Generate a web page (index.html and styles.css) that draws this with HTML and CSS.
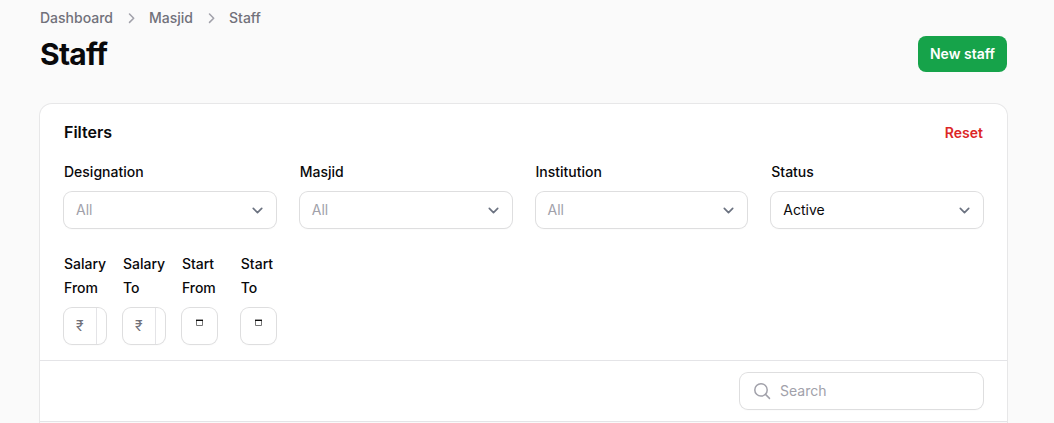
FILE: index.html
```html
<!DOCTYPE html>
<html lang="en">
<head>
<meta charset="utf-8">
<title>Staff</title>
<link rel="stylesheet" href="styles.css">
</head>
<body>
<main class="page">
  <nav class="breadcrumbs">
    <span>Dashboard</span>
    <svg class="crumb-icon" viewBox="0 0 20 20"><path d="M8.500 6 12.700 10.200l-4.200 4.200"/></svg>
    <span>Masjid</span>
    <svg class="crumb-icon" viewBox="0 0 20 20"><path d="M8.500 6 12.700 10.200l-4.200 4.200"/></svg>
    <span>Staff</span>
  </nav>
  <header class="heading">
    <h1>Staff</h1>
    <button class="primary" type="button">New staff</button>
  </header>
  <section class="card">
    <div class="filters">
      <div class="filters-head"><h2>Filters</h2><a class="reset">Reset</a></div>
      <div class="grid">
        <div class="field"><span class="label">Designation</span><div class="control select"><span class="muted">All</span><svg class="chevron" viewBox="0 0 20 20"><path d="m6 8 4 4 4-4"/></svg></div></div>
        <div class="field"><span class="label">Masjid</span><div class="control select"><span class="muted">All</span><svg class="chevron" viewBox="0 0 20 20"><path d="m6 8 4 4 4-4"/></svg></div></div>
        <div class="field"><span class="label">Institution</span><div class="control select"><span class="muted">All</span><svg class="chevron" viewBox="0 0 20 20"><path d="m6 8 4 4 4-4"/></svg></div></div>
        <div class="field"><span class="label">Status</span><div class="control select"><span>Active</span><svg class="chevron" viewBox="0 0 20 20"><path d="m6 8 4 4 4-4"/></svg></div></div>
        <div class="ranges">
          <div class="field"><span class="label">Salary From</span><div class="control money"><span class="prefix">₹</span></div></div>
          <div class="field"><span class="label">Salary To</span><div class="control money"><span class="prefix">₹</span></div></div>
          <div class="field"><span class="label">Start From</span><div class="control date"><svg class="calendar" viewBox="0 0 7 7"><path class="calendar-frame" d="M.5 1v5.500h6V1"/><path class="calendar-top" d="M0 .6h7V2H0z"/></svg></div></div>
          <div class="field"><span class="label">Start To</span><div class="control date"><svg class="calendar" viewBox="0 0 7 7"><path class="calendar-frame" d="M.5 1v5.500h6V1"/><path class="calendar-top" d="M0 .6h7V2H0z"/></svg></div></div>
        </div>
      </div>
    </div>
    <div class="toolbar">
      <div class="control search"><svg class="search-icon" viewBox="0 0 20 20"><circle cx="9" cy="8.900" r="6.200"/><path d="m13.500 13.400 4 4"/></svg><span class="muted">Search</span></div>
    </div>
    <div class="results"></div>
  </section>
</main>
</body>
</html>
```
FILE: styles.css
```css
* { box-sizing: border-box; }
body {
  margin: 0;
  height: 423px;
  overflow: hidden;
  background: #fafafa;
  color: #09090b;
  font: 14px/20px Inter, "Noto Sans", sans-serif;
}
h1, h2 { margin: 0; }
.page { padding: 8px 47px 0 40px; }
.breadcrumbs {
  display: flex;
  align-items: center;
  gap: 8px;
  color: #71717a;
  font-weight: 500;
}
.crumb-icon {
  width: 20px;
  height: 20px;
  fill: none;
  stroke: #a1a1aa;
  stroke-width: 1.5;
  stroke-linecap: round;
  stroke-linejoin: round;
}
.heading {
  display: flex;
  justify-content: space-between;
  margin: 8px 0 32px;
}
h1 {
  font-size: 30px;
  line-height: 36px;
  font-weight: 700;
  letter-spacing: -0.025em;
}
.primary {
  width: 89px;
  height: 36px;
  padding: 0;
  border: 0;
  border-radius: 8px;
  background: #16a34a;
  color: #fff;
  font: 600 14px/20px Inter, sans-serif;
  white-space: nowrap;
}
.card {
  border-radius: 12px 12px 0 0;
  background: #fff;
  box-shadow: 0 0 0 1px #e7e7e8;
}
.filters { padding: 16px 24px; }
.filters-head {
  display: flex;
  align-items: center;
  justify-content: space-between;
  height: 24px;
}
h2 { font-size: 16px; line-height: 24px; font-weight: 600; }
.reset { color: #dc2626; font-weight: 600; padding-top: 2px; }
.grid {
  display: grid;
  grid-template-columns: repeat(4, minmax(0, 1fr));
  gap: 24px;
  margin-top: 16px;
}
.ranges {
  display: grid;
  grid-template-columns: repeat(4, minmax(0, 1fr));
  gap: 24px;
}
.label { display: block; line-height: 24px; font-weight: 500; }
.control {
  display: flex;
  align-items: center;
  height: 36px;
  border-radius: 8px;
  background: #fff;
  box-shadow: 0 0 0 1px #dededf, 0 1px 2px rgba(0, 0, 0, .05);
}
.field .control { margin-top: 8px; }
.select { justify-content: space-between; padding: 0 8px 0 12px; }
.muted { color: #a1a1aa; }
.chevron {
  width: 21px;
  height: 21px;
  fill: none;
  stroke: #6b7280;
  stroke-width: 1.6;
  stroke-linecap: round;
  stroke-linejoin: round;
}
.money { width: 42px; }
.prefix {
  width: 33px;
  height: 36px;
  padding-left: 12px;
  border-right: 1px solid #e4e4e7;
  color: #71717a;
  line-height: 36px;
}
.date { align-items: flex-start; justify-content: center; padding-top: 11px; }
.calendar { width: 7px; height: 7px; }
.calendar-frame { fill: none; stroke: #777; }
.calendar-top { fill: #111; }
.toolbar {
  display: flex;
  justify-content: flex-end;
  padding: 12px 24px;
  border-top: 1px solid #e4e4e7;
}
.search { width: 243px; gap: 8px; padding-left: 12px; }
.search-icon {
  width: 20px;
  height: 20px;
  fill: none;
  stroke: #a1a1aa;
  stroke-width: 1.5;
  stroke-linecap: round;
}
.results { height: 2px; border-top: 1px solid #e4e4e7; background: #fafafa; }
```
